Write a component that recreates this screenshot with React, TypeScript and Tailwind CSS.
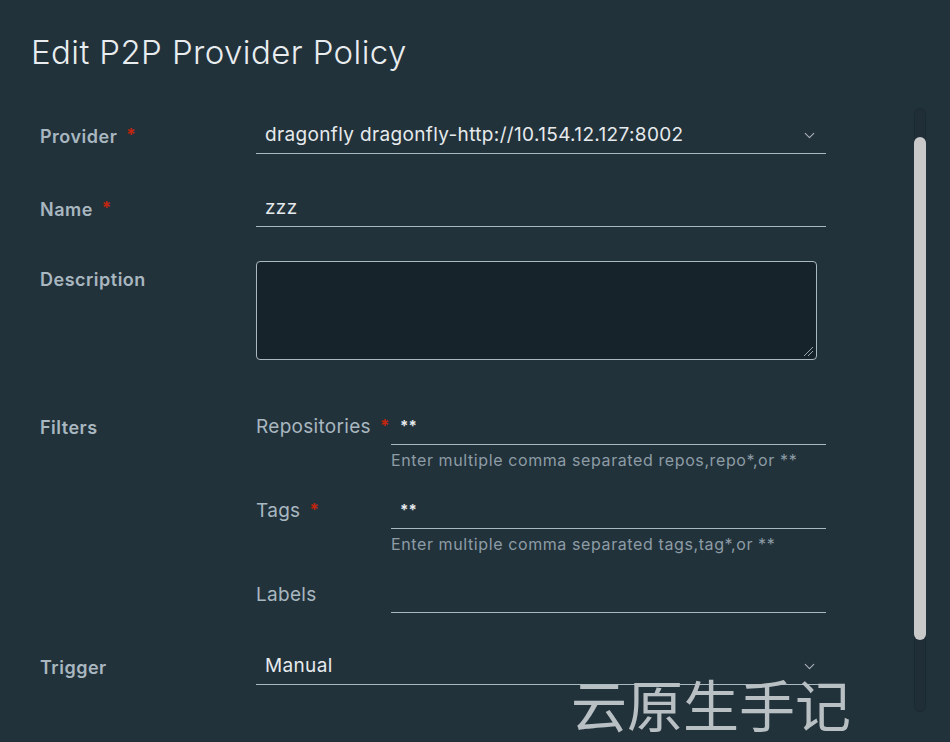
import { ChevronDown } from "lucide-react";

const font = { fontFamily: "Inter, 'Noto Sans', sans-serif" };

function Req() {
  return <span className="ml-[9px] text-[#c0260f] text-[17px] font-bold">*</span>;
}

function MainLabel({ text, req }: { text: string; req?: boolean }) {
  return (
    <div className="w-[256px] shrink-0 pl-[40px] flex items-center text-[18px] tracking-[0.5px] font-semibold text-[#a9b7c0]">
      {text}
      {req && <Req />}
    </div>
  );
}

function LineInput({ value, select }: { value: string; select?: boolean }) {
  return (
    <div className="w-[570px] h-[36px] border-b border-[#aab8c0] flex items-center pl-[9px] pr-[8px] text-[19px] tracking-[0.35px] text-[#e6eaec]">
      <span className="flex-1">{value}</span>
      {select && <ChevronDown className="w-[17px] h-[17px] text-[#aab4ba]" strokeWidth={1.5} />}
    </div>
  );
}

function SubField({ label, value, req, help }: { label: string; value: string; req?: boolean; help?: string }) {
  return (
    <div className="flex flex-col">
      <div className="flex">
        <div className="w-[135px] shrink-0 flex items-center text-[19px] tracking-[0.3px] text-[#a9b7c0]">
          {label}
          {req && <Req />}
        </div>
        <div className="w-[435px] h-[36px] border-b border-[#aab8c0] flex items-center pl-[9px] text-[15px] font-bold text-[#e6eaec]">
          {value}
        </div>
      </div>
      {help !== undefined && (
        <div className="h-[48px] pl-[135px] pt-[6px] leading-[18px] text-[16px] tracking-[0.6px] text-[#8d9ca5]">{help}</div>
      )}
    </div>
  );
}

export default function App() {
  return (
    <div className="w-[950px] h-[742px] bg-[#22323b] relative overflow-hidden flex" style={font}>
      <div className="flex-1 flex flex-col">
        <div className="pl-[31px] pt-[30px] h-[118px] text-[33px] tracking-[0.4px] font-light text-[#e9edef] leading-[44px]">
          Edit P2P Provider Policy
        </div>

        <div className="flex">
          <MainLabel text="Provider" req />
          <LineInput value="dragonfly dragonfly-http://10.154.12.127:8002" select />
        </div>

        <div className="flex mt-[37px]">
          <MainLabel text="Name" req />
          <LineInput value="zzz" />
        </div>

        <div className="flex mt-[34px]">
          <div className="w-[256px] shrink-0 pl-[40px] pt-[9px] leading-[20px] text-[18px] tracking-[0.5px] font-semibold text-[#a9b7c0]">
            Description
          </div>
          <div className="relative w-[561px] h-[99px] rounded-[4px] border border-[#aab8c0] bg-[#17232b]">
            <svg className="absolute right-[2px] bottom-[2px]" width="12" height="12" viewBox="0 0 12 12">
              <path d="M2 11 L11 2 M6 11 L11 6" stroke="#9aa6ad" strokeWidth="1" />
            </svg>
          </div>
        </div>

        <div className="flex mt-[49px]">
          <div className="w-[256px] shrink-0 pl-[40px] h-[36px] flex items-center text-[18px] tracking-[0.5px] font-semibold text-[#a9b7c0]">
            Filters
          </div>
          <div className="flex flex-col">
            <SubField label="Repositories" value="**" req help="Enter multiple comma separated repos,repo*,or **" />
            <SubField label="Tags" value="**" req help="Enter multiple comma separated tags,tag*,or **" />
            <SubField label="Labels" value="" />
          </div>
        </div>

        <div className="flex mt-[36px]">
          <MainLabel text="Trigger" />
          <LineInput value="Manual" select />
        </div>
      </div>

      <div className="w-[36px] shrink-0 pt-[108px]">
        <div className="w-[12px] h-[604px] rounded-full border border-[#1b2a31] bg-[#202f37] flex flex-col pt-[28px]">
          <div className="w-[12px] -ml-px h-[503px] rounded-full bg-[#c9c9c9]" />
        </div>
      </div>

      <div
        className="absolute left-[571px] top-[675px] text-[56px] leading-none text-[#b9c0c4] pointer-events-none"
        style={{ fontFamily: "'Noto Sans CJK SC', sans-serif" }}
      >
        云原生手记
      </div>
    </div>
  );
}
